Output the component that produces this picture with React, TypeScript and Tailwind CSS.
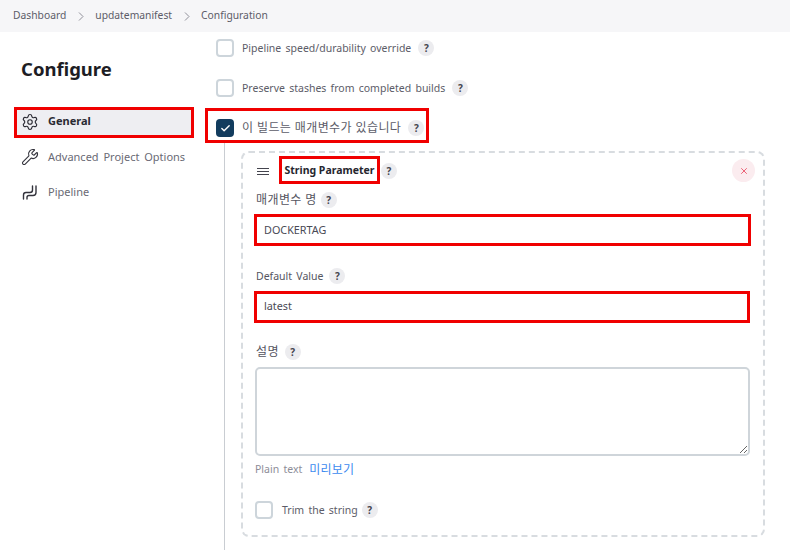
import { Check, Settings, Wrench, X } from "lucide-react";
import type { ReactNode } from "react";

const font = { fontFamily: '"Noto Sans", "Noto Sans CJK KR", sans-serif' };

function Help({ className = "" }: { className?: string }) {
  return (
    <span
      className={`flex h-4 w-4 shrink-0 items-center justify-center rounded-full bg-[#ececef] text-[10px] font-bold text-[#44444e] ${className}`}
    >
      ?
    </span>
  );
}

function Box({ checked = false }: { checked?: boolean }) {
  return checked ? (
    <span className="flex h-[18px] w-[18px] shrink-0 items-center justify-center rounded-[4px] bg-[#123c5e]">
      <Check size={11} strokeWidth={3} className="text-white" />
    </span>
  ) : (
    <span className="h-[18px] w-[18px] shrink-0 rounded-[4px] border-2 border-[#cdd5db] bg-white" />
  );
}

function CheckRow({ label, checked }: { label: string; checked?: boolean }) {
  return (
    <div className="flex h-8 items-center pl-[11px]">
      <Box checked={checked} />
      <span
        className={`ml-[8px] text-[#5c5c68] ${
          checked ? "text-[12px] tracking-[0.4px]" : "pt-[2px] text-[10.5px] [word-spacing:1.5px]"
        }`}
      >
        {label}
      </span>
      <Help className="ml-[7px]" />
    </div>
  );
}

function SideItem({ icon, label, active }: { icon: ReactNode; label: string; active?: boolean }) {
  return (
    <div
      className={
        active
          ? "flex h-[31px] w-[180px] items-center border-[3px] border-[#f00000] bg-[#eeeef2] pb-[2px] pl-[4px]"
          : "flex h-[31px] w-[180px] items-center pl-[7px]"
      }
    >
      <span className={active ? "" : "-mt-[2px]"}>{icon}</span>
      <span
        className={`ml-[9px] text-[11px] [word-spacing:2px] ${
          active ? "font-bold text-[#2a2a33]" : "text-[#6a6a75]"
        }`}
      >
        {label}
      </span>
    </div>
  );
}

function PipelineIcon() {
  return (
    <svg className="block" width="18" height="18" viewBox="0 0 18 18" fill="none" stroke="#33333c" strokeWidth="1.4" strokeLinecap="round">
      <path d="M2.5 16V12C2.5 10.5 3.3 9.5 5 9.5H9C10.5 9.5 11.5 8.5 11.5 7V3" />
      <path d="M6 16V14.5C6 13.3 6.8 12.5 8 12.5H12C14 12.5 15 11.3 15 9.5V3" />
    </svg>
  );
}

function Label({ text, help, korean }: { text: string; help: string; korean?: boolean }) {
  return (
    <div
      className={`flex h-4 items-center pl-[13px] text-[#55555f] ${
        korean ? "text-[12px] tracking-[0.4px]" : "text-[10.5px] [word-spacing:1.5px]"
      }`}
    >
      <span className={korean ? "" : "pt-[2px]"}>{text}</span>
      <Help className={help} />
    </div>
  );
}

function Crumb() {
  return (
    <svg className="mr-[11px] ml-[12px]" width="6" height="9" viewBox="0 0 6 9" fill="none" stroke="#8f8f99" strokeWidth="1">
      <path d="M1 .5 5 4.5 1 8.5" />
    </svg>
  );
}

export default function App() {
  return (
    <div className="flex h-[550px] w-[790px] flex-col overflow-hidden bg-white" style={font}>
      <nav className="flex h-8 shrink-0 items-center bg-[#f6f6f8] pl-[13px] text-[10.3px] text-[#5c5c68]">
        <span>Dashboard</span>
        <Crumb />
        <span>updatemanifest</span>
        <Crumb />
        <span>Configuration</span>
      </nav>

      <div className="flex min-h-0 flex-1">
        <aside className="w-[205px] shrink-0 pl-[14px]">
          <h1 className="mt-[25px] pl-[7px] text-[18.5px] leading-6 font-bold text-[#1d1d24]">Configure</h1>
          <div className="mt-[26px] flex flex-col gap-[4px]">
            <SideItem active label="General" icon={<Settings size={18} strokeWidth={1.5} className="block text-[#2a2a33]" />} />
            <SideItem label="Advanced Project Options" icon={<Wrench size={18} strokeWidth={1.5} className="block text-[#33333c]" />} />
            <SideItem label="Pipeline" icon={<PipelineIcon />} />
          </div>
        </aside>

        <main className="min-w-0 flex-1">
          <CheckRow label="Pipeline speed/durability override" />
          <div className="mt-2">
            <CheckRow label="Preserve stashes from completed builds" />
          </div>
          <div className="mt-1 flex h-[35px] w-[224px] items-center border-[3px] border-[#f00000] pt-[5px]">
            <div className="-ml-[3px]">
              <CheckRow checked label="이 빌드는 매개변수가 있습니다" />
            </div>
          </div>

          <div className="ml-[19px] h-[420px] border-l border-[#c9cdd2] pt-[8px] pl-[16px]">
            <section className="relative h-[386px] w-[524px] rounded-[8px] border-2 border-dashed border-[#d8dce0]">
              <div className="mt-[3px] flex h-[28px] items-center pl-[14px]">
                <span className="mt-[2px] flex w-[12px] flex-col gap-[2px]">
                  <span className="h-[1px] bg-[#44444e]" />
                  <span className="h-[1px] bg-[#44444e]" />
                  <span className="h-[1px] bg-[#44444e]" />
                </span>
                <span className="ml-[10px] flex h-[28px] w-[101px] items-center justify-center border-[3px] border-[#f00000] pt-[2px] text-[10.5px] font-bold whitespace-nowrap text-[#26262e]">
                  String Parameter
                </span>
                <Help className="mt-[2px] ml-[1px]" />
              </div>
              <button className="absolute top-[6px] right-[8px] flex h-[23px] w-[23px] items-center justify-center rounded-full bg-[#fbecef] text-[#e8475f]">
                <X size={10} strokeWidth={2} />
              </button>

              <div className="mt-[8px]">
                <Label korean text="매개변수 명" help="ml-[4px]" />
              </div>
              <div className="mt-[6px] ml-[11px] flex h-[32px] w-[497px] items-center border-[3px] border-[#f00000] pl-[7px] text-[10.8px] text-[#4a4a55]">
                DOCKERTAG
              </div>

              <div className="mt-[22px]">
                <Label text="Default Value" help="ml-[6px]" />
              </div>
              <div className="mt-[7px] ml-[11px] flex h-[32px] w-[496px] items-center border-[3px] border-[#f00000] pb-[1px] pl-[7px] text-[10.8px] text-[#4a4a55]">
                latest
              </div>

              <div className="mt-[21px]">
                <Label korean text="설명" help="ml-[6px]" />
              </div>
              <textarea className="mt-[7px] ml-[12px] block h-[89px] w-[495px] rounded-[5px] border-2 border-[#cfd5da] bg-white" />

              <div className="mt-[5px] flex items-center pl-[12px]">
                <span className="text-[10.5px] [word-spacing:1.5px] text-[#8d8d98]">Plain text</span>
                <a className="ml-[7px] text-[12px] tracking-[0.2px] text-[#3d8bef]">미리보기</a>
              </div>

              <div className="mt-[22px] flex items-center pl-[12px]">
                <Box />
                <span className="ml-[9px] pt-[2px] text-[10.5px] [word-spacing:1.5px] text-[#5c5c68]">Trim the string</span>
                <Help className="ml-[4px]" />
              </div>
            </section>
          </div>
        </main>
      </div>
    </div>
  );
}
